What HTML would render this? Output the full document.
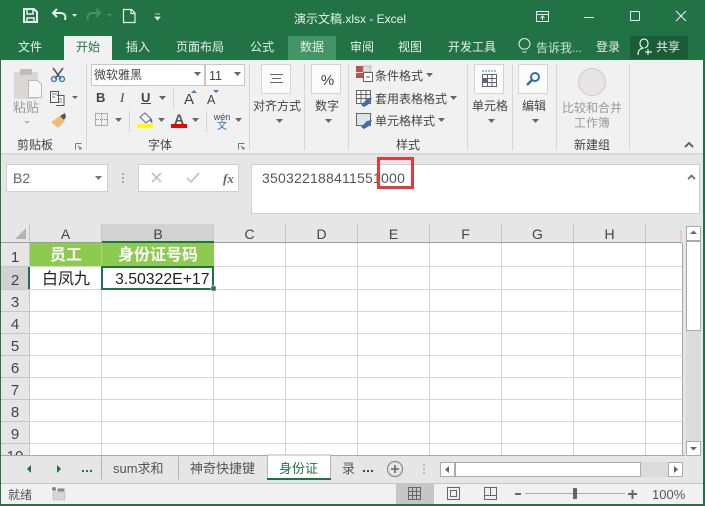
<!DOCTYPE html>
<html lang="zh"><head><meta charset="utf-8"><title>演示文稿.xlsx - Excel</title>
<style>
html,body{margin:0;padding:0;width:705px;height:506px;overflow:hidden;background:#fff}
svg{display:block}
text{font-family:"Liberation Sans","Noto Sans CJK SC",sans-serif;font-size:12px;fill:#444}
.m{text-anchor:middle}
.g{fill:#999}
.col{font-size:14px;fill:#444;text-anchor:middle}
.row{font-size:15px;fill:#444;text-anchor:middle}
</style></head><body>
<svg width="705" height="506" viewBox="0 0 705 506" xmlns="http://www.w3.org/2000/svg">
<defs>
<path id="dd" d="M0 0h7l-3.500 4z" fill="#666"/>
</defs>
<rect width="705" height="506" fill="#e6e6e6"/>
<!-- title bar -->
<rect width="705" height="60" fill="#217346"/>
<g fill="none" stroke="#e9f2ec" stroke-width="2">
<path d="M24 9h10l3 3v10H24z"/>
<path d="M27 10v4h6v-4M27 22v-4h7v4" stroke-width="1.500"/>
</g>
<path d="M57 9l-4 4 4 4M54 13h6c5 0 6 3 5 7" fill="none" stroke="#e9f2ec" stroke-width="2"/>
<path d="M72 14h5l-2.500 3z" fill="#e9f2ec"/>
<path d="M96 9l4 4-4 4M99 13h-6c-5 0-6 3-5 7" fill="none" stroke="#4a8f68" stroke-width="2"/>
<path d="M107 14h5l-2.500 3z" fill="#4a8f68"/>
<path d="M123.500 9.500h8l3.500 3.500v9.500h-11.500z M131 9.500v4h4" fill="none" stroke="#e9f2ec" stroke-width="1.200"/>
<path d="M155 14h5M155 17h5l-2.500 3z" fill="#e9f2ec" stroke="#e9f2ec" stroke-width=".8"/>
<text x="294" y="23" style="fill:#e9f2ec">演示文稿.xlsx - Excel</text>
<!-- window controls -->
<g fill="none" stroke="#e9f2ec" stroke-width="1">
<rect x="536.500" y="11.500" width="12" height="10"/><path d="M536.500 14.500h12M542.500 20v-4M540.500 18l2-2 2 2"/>
<path d="M584 17.500h10"/>
<rect x="630.500" y="11.500" width="9" height="9"/>
<path d="M676 11l10 10M686 11l-10 10" stroke-width="1.100"/>
</g>
<!-- tabs -->
<rect x="64" y="36" width="48" height="24" fill="#f1f1f1"/>
<rect x="288" y="36" width="48" height="24" fill="#439467"/>
<rect x="630" y="36" width="58" height="23" fill="#1a5c37"/>
<g>
<text x="18" y="51" style="fill:#e9f2ec">文件</text>
<text x="76" y="51" style="fill:#217346">开始</text>
<text x="126" y="51" style="fill:#e9f2ec">插入</text>
<text x="176" y="51" style="fill:#e9f2ec">页面布局</text>
<text x="250" y="51" style="fill:#e9f2ec">公式</text>
<text x="300" y="51" style="fill:#e9f2ec">数据</text>
<text x="350" y="51" style="fill:#e9f2ec">审阅</text>
<text x="398" y="51" style="fill:#e9f2ec">视图</text>
<text x="448" y="51" style="fill:#e9f2ec">开发工具</text>
<text x="536" y="52" style="fill:#cfe2d6">告诉我...</text>
<text x="596" y="51" style="fill:#e9f2ec">登录</text>
<text x="656" y="51" style="fill:#e9f2ec">共享</text>
</g>
<path d="M522 49c-2-2-3-3-3-5a5.500 5.500 0 1 1 11 0c0 2-1 3-3 5zM522.500 52h4" fill="none" stroke="#e9f2ec"/>
<path d="M638 55c0-5 2-6 5-7-2-1-3-2-3-5a4 4 0 0 1 8 0c0 3-1 4-3 5M648 49v6M645 52h7" fill="none" stroke="#e9f2ec" stroke-width="1.200"/>
<!-- ribbon -->
<rect x="1" y="60" width="702" height="93" fill="#f1f1f1"/>
<rect x="1" y="153" width="702" height="2" fill="#d9d9d9"/>
<g stroke="#d6d6d6" stroke-width="1">
<path d="M86.500 64v86M249.500 64v86M304.500 64v86M348.500 64v86M467.500 64v86M512.500 64v86M556.500 64v86M629.500 64v86"/>
</g>
<!-- clipboard -->
<rect x="14" y="72" width="24" height="27" fill="#dad7d7"/>
<rect x="20" y="69" width="12" height="6" rx="1" fill="#bfbcbc"/>
<path d="M28.500 80.500h9l4 4v13h-13z" fill="#f7f7f7" stroke="#bbb"/>
<text class="g m" x="26" y="112" style="font-size:13px;fill:#999">粘贴</text>
<path d="M24 121h6l-3 3z" fill="#b8b8b8"/>
<!-- scissors -->
<path d="M53 68l8 11M63 68l-8 11" stroke="#555" stroke-width="1.500" fill="none"/>
<circle cx="54" cy="79" r="2.500" fill="none" stroke="#3f7fb5" stroke-width="1.500"/>
<circle cx="62" cy="79" r="2.500" fill="none" stroke="#3f7fb5" stroke-width="1.500"/>
<!-- copy -->
<path d="M50.500 91.500h8v11h-8zM57 95.500h7v10h-8" fill="#f7f7f7" stroke="#555"/>
<path d="M52 94h5M52 97h3M58 99h4M58 102h4" stroke="#555" stroke-width=".8"/>
<path d="M72 96h6l-3 3z" fill="#666"/>
<!-- painter -->
<path d="M51 122l9-6 5 5-7 7z" fill="#eebc77"/>
<path d="M60 116l5-3 1 4-2 3z" fill="#555"/>
<!-- group labels -->
<text x="17" y="149">剪贴板</text>
<text x="148" y="149">字体</text>
<text x="396" y="149">样式</text>
<text x="574" y="149">新建组</text>
<path d="M75.500 143.500h6M75.500 143.500v6M78 146l3 3M81 147v2h-2" fill="none" stroke="#777"/>
<path d="M238.500 143.500h6M238.500 143.500v6M241 146l3 3M244 147v2h-2" fill="none" stroke="#777"/>
<!-- font -->
<rect x="91.500" y="64.500" width="113" height="21" fill="#fff" stroke="#c6c6c6"/>
<rect x="205.500" y="64.500" width="39" height="21" fill="#fff" stroke="#c6c6c6"/>
<text x="94" y="79">微软雅黑</text>
<text x="209" y="80" style="font-size:12.500px">11</text>
<use href="#dd" x="194" y="72"/><use href="#dd" x="234" y="72"/>
<text x="96" y="102" style="font-weight:700;font-size:13px">B</text>
<text x="120" y="102" style="font-style:italic;font-family:'Liberation Serif',serif;font-size:13px">I</text>
<text x="141" y="102" style="font-weight:700;font-size:13px">U</text>
<path d="M141 103.500h10" stroke="#444"/>
<use href="#dd" x="159" y="96"/>
<path d="M173.500 88v21M129.500 111v21M206.500 111v21" stroke="#d6d6d6"/>
<text x="184" y="104" style="font-size:15px">A</text>
<path d="M191 93h6l-3-3z" fill="#3f7fb5"/>
<text x="207" y="104" style="font-size:12.500px">A</text>
<path d="M213 90h6l-3 3z" fill="#3f7fb5"/>
<!-- borders -->
<rect x="95.500" y="113.500" width="12" height="12" fill="none" stroke="#666" stroke-dasharray="1 1"/>
<path d="M101.500 114v11M96 119.500h11" stroke="#888" stroke-dasharray="1 1"/>
<use href="#dd" x="115" y="118"/>
<!-- fill -->
<path d="M140 117l5-4 6 6-5 4z" fill="#f7f7f7" stroke="#666"/>
<path d="M150 118c2 1 3 3 2 5-2-1-2-3-2-5z" fill="#3f6ea5"/>
<rect x="137" y="124" width="16" height="4" fill="#ffff00"/>
<use href="#dd" x="158" y="118"/>
<text x="179" y="124" style="font-size:14px;font-weight:700;fill:#555;text-anchor:middle">A</text>
<rect x="171" y="124" width="16" height="4" fill="#f00000"/>
<use href="#dd" x="192" y="118"/>
<text class="m" x="222" y="120" style="font-size:9px;fill:#444">wén</text>
<text class="m" x="222" y="129" style="font-size:10px;fill:#2f6fa8">文</text>
<use href="#dd" x="235" y="118"/>
<!-- big buttons -->
<g fill="#fbfbfb" stroke="#d3d3d3">
<rect x="261.500" y="64.500" width="29" height="29"/>
<rect x="311.500" y="64.500" width="29" height="29"/>
<rect x="474.500" y="64.500" width="29" height="29"/>
<rect x="518.500" y="64.500" width="29" height="29"/>
</g>
<path d="M270 74.500h13M272 78.500h9M270 82.500h13" stroke="#666"/>
<text class="m" x="327.500" y="85" style="font-size:15px">%</text>
<g fill="none" stroke="#666"><rect x="482.500" y="74.500" width="14" height="12"/><path d="M482 78.500h15M482 82.500h15M487.500 75v12M492 75v12"/></g>
<rect x="483" y="79" width="4" height="3" fill="#3f6ea5"/>
<path d="M482 71h15" stroke="#3f7fb5" stroke-dasharray="2 1"/>
<circle cx="535" cy="77" r="4" fill="none" stroke="#2f6fa8" stroke-width="2"/>
<path d="M532 80l-5 5" stroke="#2f6fa8" stroke-width="2.500"/>
<text class="m" x="277" y="110">对齐方式</text>
<text class="m" x="327" y="110">数字</text>
<text class="m" x="490" y="110">单元格</text>
<text class="m" x="534" y="110">编辑</text>
<g><use href="#dd" x="276" y="119"/><use href="#dd" x="325" y="119"/><use href="#dd" x="488" y="119"/><use href="#dd" x="532" y="119"/></g>
<circle cx="592" cy="82" r="13.500" fill="#e6e4e4" stroke="#c9c9c9"/>
<text class="m" x="592" y="112" style="fill:#999">比较和合并</text>
<text class="m" x="592" y="127" style="fill:#999">工作簿</text>
<path d="M685 147l4-4 4 4" fill="none" stroke="#555" stroke-width="1.800"/>
<!-- styles -->
<rect x="356" y="66" width="7" height="6" fill="#c0504d"/><rect x="356" y="73" width="7" height="5" fill="#c0504d"/>
<rect x="363" y="66" width="8" height="6" fill="#ddd" stroke="#888" stroke-width=".5"/>
<rect x="363.500" y="72.500" width="9" height="9" fill="#fff" stroke="#666"/>
<path d="M366 77h4" stroke="#555"/>
<text x="375" y="80">条件格式</text><use href="#dd" x="426" y="73"/>
<g fill="none" stroke="#666"><rect x="356.500" y="90.500" width="14" height="13" fill="#f7f7f7"/><path d="M356 94.500h15M356 98.500h15M361 91v13M366 91v13"/></g>
<path d="M361 105l6-6 5-1-3 6-5 3z" fill="#3f6ea5"/>
<text x="375" y="103">套用表格格式</text><use href="#dd" x="450" y="96"/>
<rect x="356.500" y="113.500" width="14" height="12" fill="#dfe3ea" stroke="#666"/>
<path d="M361 127l6-6 5-1-3 6-5 3z" fill="#3f6ea5"/>
<text x="375" y="125">单元格样式</text><use href="#dd" x="438" y="118"/>
<!-- formula bar -->
<rect x="1" y="155" width="702" height="69" fill="#e6e6e6"/>
<rect x="6.500" y="164.500" width="101" height="27" fill="#fff" stroke="#cfcfcf"/>
<text x="13" y="183" style="font-size:14px;fill:#666">B2</text>
<path d="M95 176h7l-3.500 4z" fill="#777"/>
<g fill="#a8a8a8"><rect x="122" y="173" width="2" height="2"/><rect x="122" y="177" width="2" height="2"/><rect x="122" y="181" width="2" height="2"/></g>
<rect x="138.500" y="164.500" width="100" height="27" fill="#fff" stroke="#cfcfcf"/>
<path d="M152 173l9 9M161 173l-9 9" stroke="#c3c3c3" stroke-width="1.800" fill="none"/>
<path d="M187 178l4 4 8-9" stroke="#c3c3c3" stroke-width="1.800" fill="none"/>
<text x="223" y="183" style="font-family:'Liberation Serif',serif;font-style:italic;font-weight:700;font-size:13px;fill:#666">fx</text>
<rect x="251.500" y="164.500" width="448" height="49" fill="#fff" stroke="#cfcfcf"/>
<text x="262" y="183" style="font-size:14px;fill:#555;letter-spacing:.22px">350322188411551000</text>
<path d="M688 179l3.500-3.500 3.500 3.500" fill="none" stroke="#666" stroke-width="1.600"/>
<rect x="378.500" y="158.500" width="34" height="29" fill="none" stroke="#e53a3a" stroke-width="3"/>
<!-- sheet headers -->
<rect x="1" y="224" width="702" height="232" fill="#e6e6e6"/>
<rect x="30" y="243" width="652" height="212" fill="#fff"/>
<rect x="102" y="224" width="112" height="18" fill="#d2d2d2"/>
<rect x="1" y="267" width="29" height="22" fill="#d2d2d2"/>
<path d="M15 239l11-11v11z" fill="#b4b4b4"/>
<g stroke="#c6c6c6">
<path d="M29.500 224v231M101.500 224v19M213.500 224v19M285.500 224v19M357.500 224v19M429.500 224v19M501.500 224v19M573.500 224v19M645.500 224v19"/>
<path d="M1 266.500h29M1 289.500h29M1 311.500h29M1 333.500h29M1 355.500h29M1 377.500h29M1 399.500h29M1 421.500h29M1 443.500h29"/>
</g>
<g stroke="#d6d6d6">
<path d="M101.500 243v212M213.500 243v212M285.500 243v212M357.500 243v212M429.500 243v212M501.500 243v212M573.500 243v212M645.500 243v212"/>
<path d="M30 266.500h652M30 289.500h652M30 311.500h652M30 333.500h652M30 355.500h652M30 377.500h652M30 399.500h652M30 421.500h652M30 443.500h652"/>
</g>
<path d="M1 242.500h681" stroke="#9e9e9e"/>
<path d="M682.500 243v212" stroke="#a8a8a8"/>
<path d="M1 455.500h684" stroke="#a8a8a8"/>
<path d="M102 242h112" stroke="#217346" stroke-width="2"/>
<path d="M29 267v22" stroke="#217346" stroke-width="2"/>
<text class="col" x="65.500" y="239">A</text>
<text class="col" x="158" y="239">B</text>
<text class="col" x="249.500" y="239">C</text>
<text class="col" x="321.500" y="239">D</text>
<text class="col" x="393.500" y="239">E</text>
<text class="col" x="465.500" y="239">F</text>
<text class="col" x="537.500" y="239">G</text>
<text class="col" x="609.500" y="239">H</text>
<path d="M681 230v11" stroke="#e8b48c" stroke-width="1"/>
<text class="row" x="15" y="262">1</text>
<text class="row" x="15" y="285">2</text>
<text class="row" x="15" y="307">3</text>
<text class="row" x="15" y="329">4</text>
<text class="row" x="15" y="351">5</text>
<text class="row" x="15" y="373">6</text>
<text class="row" x="15" y="395">7</text>
<text class="row" x="15" y="417">8</text>
<text class="row" x="15" y="439">9</text>
<clipPath id="c10"><rect x="1" y="444" width="28" height="11"/></clipPath>
<text class="row" x="15" y="461" clip-path="url(#c10)">10</text>
<!-- cells -->
<rect x="30" y="243" width="184" height="23" fill="#8ccb4f"/>
<path d="M101.500 243v23" stroke="#a6d774"/>
<text class="m" x="66" y="260" style="font-size:16px;font-weight:700;fill:#fff">员工</text>
<text class="m" x="158" y="260" style="font-size:16px;font-weight:700;fill:#fff">身份证号码</text>
<text class="m" x="66" y="284" style="font-size:16px;fill:#222">白凤九</text>
<text x="209.500" y="284" style="font-size:15.800px;fill:#222;text-anchor:end">3.50322E+17</text>
<rect x="102" y="267" width="111" height="22" fill="none" stroke="#217346" stroke-width="2"/>
<rect x="211" y="286" width="5" height="5" fill="#217346" stroke="#fff" stroke-width=".6"/>
<!-- v scrollbar -->
<rect x="685" y="224" width="17" height="232" fill="#e6e6e6"/>
<rect x="686" y="241" width="15" height="202" fill="#dbdbdb"/>
<rect x="686.500" y="226.500" width="14" height="14" fill="#fff" stroke="#ababab"/>
<path d="M690 234l3.500-3.500 3.500 3.500z" fill="#666"/>
<rect x="686.500" y="241.500" width="14" height="89" fill="#fff" stroke="#ababab"/>
<rect x="686.500" y="441.500" width="14" height="14" fill="#fff" stroke="#ababab"/>
<path d="M690 447h7l-3.500 3.500z" fill="#666"/>
<!-- tab bar -->
<rect x="1" y="456" width="702" height="27" fill="#e6e6e6"/>
<path d="M27 469l4-4v8z" fill="#217346"/>
<path d="M61 469l-4-4v8z" fill="#217346"/>
<g fill="#217346"><rect x="82" y="470" width="2" height="2"/><rect x="86" y="470" width="2" height="2"/><rect x="90" y="470" width="2" height="2"/></g>
<path d="M101.500 457v22M178.500 457v22" stroke="#b5b5b5"/>
<text x="113" y="473" style="font-size:13px;fill:#555">sum求和</text>
<text x="190" y="473" style="font-size:13px;fill:#555">神奇快捷键</text>
<path d="M267.500 480v-25h63v25" fill="#fff" stroke="#b5b5b5"/>
<rect x="267" y="478" width="64" height="2" fill="#217346"/>
<text x="279" y="473" style="font-size:13px;fill:#217346">身份证</text>
<text x="342" y="473" style="font-size:13px;fill:#555">录</text>
<g fill="#444"><rect x="363" y="470" width="2" height="2"/><rect x="367" y="470" width="2" height="2"/><rect x="371" y="470" width="2" height="2"/></g>
<circle cx="395" cy="469" r="7.500" fill="none" stroke="#8a8a8a" stroke-width="1.200"/>
<path d="M391 469h8M395 465v8" stroke="#666" stroke-width="1.600"/>
<g fill="#bcbcbc"><rect x="423" y="464" width="2" height="2"/><rect x="423" y="468" width="2" height="2"/><rect x="423" y="472" width="2" height="2"/></g>
<rect x="441" y="462" width="227" height="15" fill="#dbdbdb"/>
<rect x="440.500" y="462.500" width="14" height="14" fill="#fff" stroke="#ababab"/>
<path d="M445 469.500l4-3.500v7z" fill="#666"/>
<rect x="455.500" y="462.500" width="185" height="14" fill="#fff" stroke="#ababab"/>
<rect x="668.500" y="462.500" width="14" height="14" fill="#fff" stroke="#ababab"/>
<path d="M678 469.500l-4-3.500v7z" fill="#666"/>
<!-- status bar -->
<path d="M1 483.500h702" stroke="#c6c6c6"/>
<rect x="1" y="484" width="702" height="20" fill="#f1f1f1"/>
<text x="8" y="499" style="fill:#555">就绪</text>
<rect x="52" y="487" width="4" height="4" rx="2" fill="#888"/>
<rect x="57.500" y="488.500" width="7" height="3" fill="#888"/>
<rect x="53" y="492" width="12" height="8" fill="#d6d6d6" stroke="#888" stroke-width=".6" stroke-dasharray="1 1"/>
<rect x="396" y="484" width="38" height="20" fill="#c6c6c6"/>
<g fill="none" stroke="#666">
<rect x="408.500" y="487.500" width="12" height="12"/><path d="M412.500 488v11M416.500 488v11M409 491.500h11M409 495.500h11"/>
<rect x="447.500" y="487.500" width="12" height="12"/><rect x="450.500" y="490.500" width="6" height="6"/>
<rect x="484.500" y="487.500" width="12" height="12"/><path d="M490.500 488v7M485 495.500h11"/>
</g>
<rect x="515" y="493" width="6" height="2" fill="#666"/>
<path d="M525 493.500h100" stroke="#aaa"/>
<rect x="573" y="488" width="4" height="11" fill="#666"/>
<path d="M628 494h9M632.500 490v9" stroke="#666" stroke-width="2"/>
<text x="652" y="499" style="font-size:13px;fill:#555">100%</text>
<!-- frame -->
<rect x="0" y="60" width="1" height="446" fill="#217346"/>
<rect x="703" y="60" width="2" height="446" fill="#217346"/>
<rect x="0" y="504" width="705" height="2" fill="#217346"/>
</svg>
</body></html>
